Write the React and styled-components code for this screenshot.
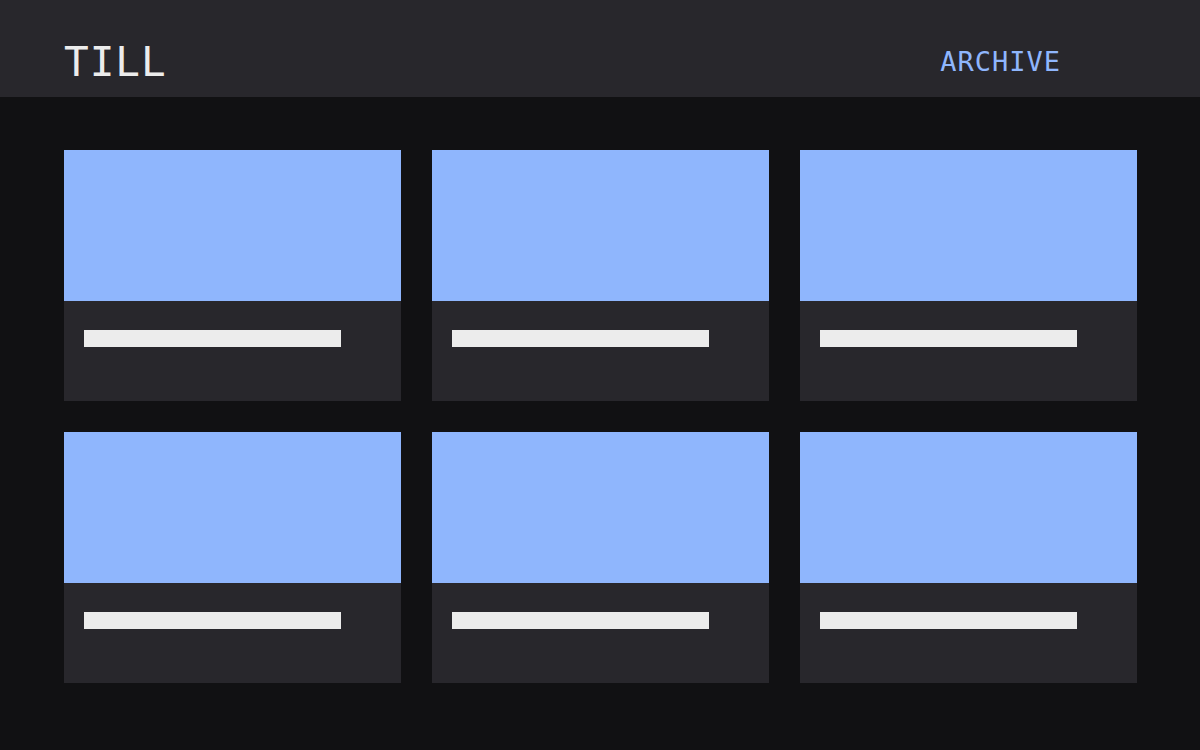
import styled, { createGlobalStyle } from "styled-components";

const GlobalStyle = createGlobalStyle`
  html, body {
    margin: 0;
    padding: 0;
    background: #111113;
  }
  body {
    font-family: "DejaVu Sans Mono", "Liberation Mono", monospace;
    min-height: 750px;
  }
`;

const Page = styled.div`
  min-height: 750px;
  background: #111113;
`;

const Header = styled.header`
  height: 97px;
  box-sizing: border-box;
  padding: 0 139px 0 64px;
  background: #28272c;
  display: flex;
  align-items: flex-start;
  justify-content: space-between;
`;

const Logo = styled.div`
  color: #ececec;
  font-size: 41px;
  letter-spacing: 1px;
  line-height: 1;
  margin-top: 42px;
`;

const NavLink = styled.a`
  color: #8fb6fd;
  font-size: 27px;
  letter-spacing: 1px;
  text-decoration: none;
  line-height: 1;
  margin-top: 48px;
`;

const Grid = styled.main`
  display: grid;
  grid-template-columns: repeat(3, 337px);
  gap: 31px;
  padding: 53px 0 0 64px;
`;

const Card = styled.article`
  display: flex;
  flex-direction: column;
  height: 251px;
  background: #28272c;
`;

const Thumb = styled.div`
  height: 151px;
  background: #8fb6fd;
`;

const Body = styled.div`
  padding: 29px 20px 0;
`;

const TitleBar = styled.div`
  width: ${(p) => p.$width}px;
  height: 17px;
  background: #ececec;
`;

const cards = Array.from({ length: 6 }, (_, i) => ({ id: i, titleWidth: 257 }));

export default function App() {
  return (
    <>
      <GlobalStyle />
      <Page>
        <Header>
          <Logo>TILL</Logo>
          <NavLink href="#">ARCHIVE</NavLink>
        </Header>
        <Grid>
          {cards.map((c) => (
            <Card key={c.id}>
              <Thumb />
              <Body>
                <TitleBar $width={c.titleWidth} />
              </Body>
            </Card>
          ))}
        </Grid>
      </Page>
    </>
  );
}
